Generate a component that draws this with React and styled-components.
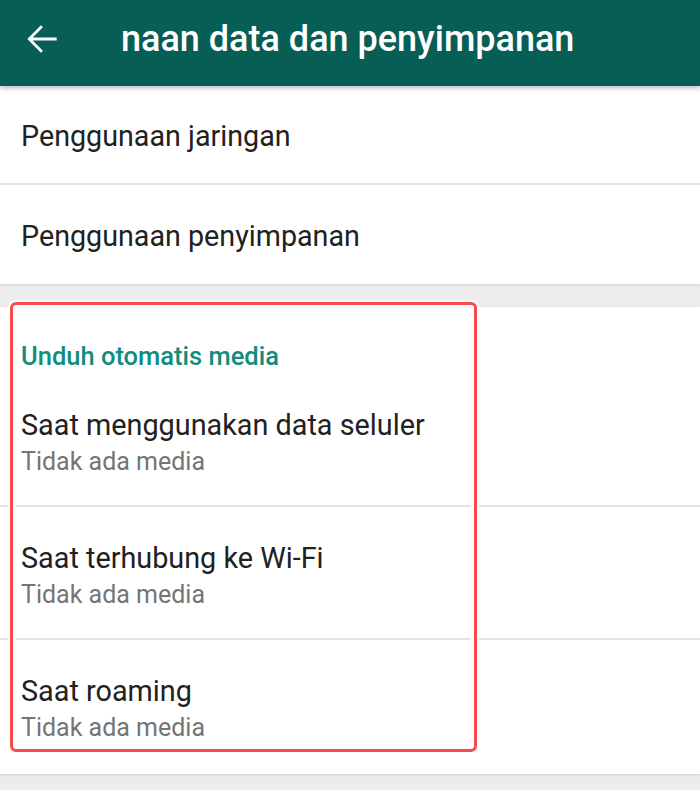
import React from 'react';
import styled, { createGlobalStyle } from 'styled-components';

const Global = createGlobalStyle`
  html, body { margin: 0; padding: 0; background: #ececec; }
  body { font-family: Roboto, "Noto Sans", sans-serif; }
`;

const Screen = styled.div`
  width: 700px;
  height: 790px;
  overflow: hidden;
  background: #ececec;
  display: flex;
  flex-direction: column;
`;

const TopBar = styled.header`
  height: 86px;
  flex-shrink: 0;
  background: #075e54;
  display: flex;
  align-items: center;
  padding-left: 20px;
  padding-bottom: 8px;
  box-sizing: border-box;
  box-shadow: 0 2px 5px rgba(0, 0, 0, 0.28);
  position: relative;
  z-index: 2;
`;

const BackBtn = styled.div`
  width: 44px;
  height: 44px;
  display: flex;
  align-items: center;
  justify-content: center;
  margin-right: 57px;
`;

const Title = styled.h1`
  margin: 0;
  color: #fff;
  font-size: 36px;
  font-weight: 500;
  white-space: nowrap;
`;

const Card = styled.section`
  background: #fff;
  display: flex;
  flex-direction: column;
  position: relative;
  box-shadow: 0 1px 2px rgba(0, 0, 0, 0.12);
  margin-bottom: ${p => p.$gap || 0}px;
`;

const SimpleRow = styled.div`
  height: ${p => p.$h}px;
  display: flex;
  align-items: center;
  padding: 2px 0 0 21px;
  font-size: 28.7px;
  color: #212121;
  border-bottom: ${p => (p.$line ? '2px solid #e3e3e3' : 'none')};
  box-sizing: border-box;
`;

const SectionHead = styled.div`
  height: 67px;
  box-sizing: border-box;
  padding: 33px 0 0 21px;
  color: #128c7e;
  font-size: 25.5px;
  line-height: 32px;
  font-weight: 500;
`;

const Item = styled.div`
  height: ${p => p.$h}px;
  box-sizing: border-box;
  padding: 34px 0 0 21px;
  border-bottom: ${p => (p.$line ? '2px solid #e3e3e3' : 'none')};
  display: flex;
  flex-direction: column;
`;

const ItemTitle = styled.div`
  font-size: 28.8px;
  color: #212121;
  line-height: 34px;
`;

const ItemSub = styled.div`
  font-size: 25px;
  color: #757575;
  line-height: 30px;
  margin-top: 5px;
`;

const Highlight = styled.div`
  position: absolute;
  left: 10px;
  top: -5px;
  width: 467px;
  height: 450px;
  box-sizing: border-box;
  border: 3px solid #fb4a4d;
  border-radius: 6px;
  box-shadow: 0 0 0 2px rgba(255, 255, 255, 0.8), inset 0 0 0 3px #fff;
  pointer-events: none;
`;

const items = [
  { title: 'Saat menggunakan data seluler', sub: 'Tidak ada media', h: 133, line: true },
  { title: 'Saat terhubung ke Wi-Fi', sub: 'Tidak ada media', h: 133, line: true },
  { title: 'Saat roaming', sub: 'Tidak ada media', h: 134, line: false },
];

const BackArrow = () => (
  <svg width="44" height="44" viewBox="0 0 24 24">
    <path fill="#fff" d="M20 11.2H6.9l5.6-5.6L11.4 4.5 4 12l7.4 7.5 1.1-1.1-5.6-5.6H20z" />
  </svg>
);

export default function App() {
  return (
    <Screen>
      <Global />
      <TopBar>
        <BackBtn><BackArrow /></BackBtn>
        <Title>naan data dan penyimpanan</Title>
      </TopBar>
      <Card $gap={23}>
        <SimpleRow $h={99} $line>Penggunaan jaringan</SimpleRow>
        <SimpleRow $h={99}>Penggunaan penyimpanan</SimpleRow>
      </Card>
      <Card>
        <Highlight />
        <SectionHead>Unduh otomatis media</SectionHead>
        {items.map((it, i) => (
          <Item key={i} $h={it.h} $line={it.line}>
            <ItemTitle>{it.title}</ItemTitle>
            <ItemSub>{it.sub}</ItemSub>
          </Item>
        ))}
      </Card>
    </Screen>
  );
}
